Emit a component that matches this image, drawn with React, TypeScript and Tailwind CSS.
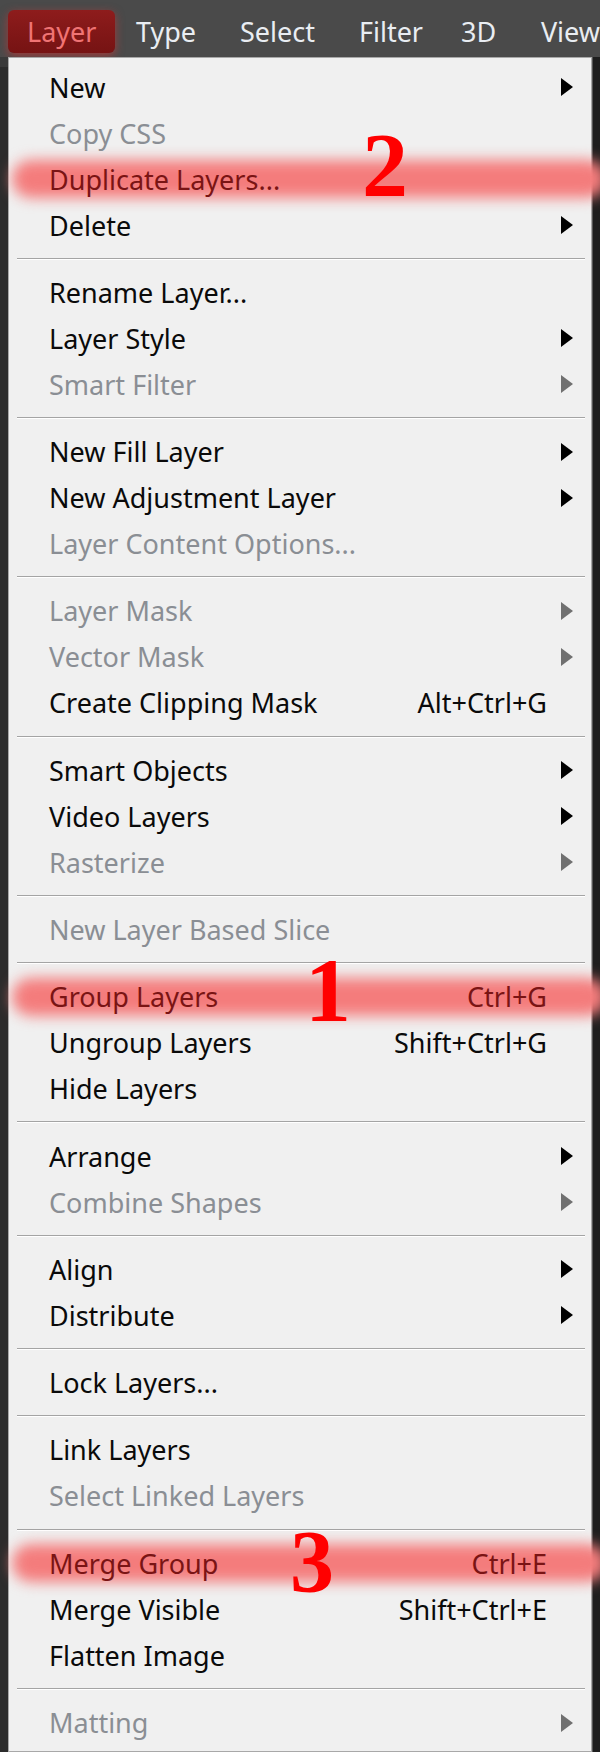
import React from 'react';

type Item = {
  label: string;
  shortcut?: string;
  arrow?: boolean;
  disabled?: boolean;
  marked?: boolean;
};

type Entry = Item | 'sep';

const entries: Entry[] = [
  { label: 'New', arrow: true },
  { label: 'Copy CSS', disabled: true },
  { label: 'Duplicate Layers...', marked: true },
  { label: 'Delete', arrow: true },
  'sep',
  { label: 'Rename Layer...' },
  { label: 'Layer Style', arrow: true },
  { label: 'Smart Filter', arrow: true, disabled: true },
  'sep',
  { label: 'New Fill Layer', arrow: true },
  { label: 'New Adjustment Layer', arrow: true },
  { label: 'Layer Content Options...', disabled: true },
  'sep',
  { label: 'Layer Mask', arrow: true, disabled: true },
  { label: 'Vector Mask', arrow: true, disabled: true },
  { label: 'Create Clipping Mask', shortcut: 'Alt+Ctrl+G' },
  'sep',
  { label: 'Smart Objects', arrow: true },
  { label: 'Video Layers', arrow: true },
  { label: 'Rasterize', arrow: true, disabled: true },
  'sep',
  { label: 'New Layer Based Slice', disabled: true },
  'sep',
  { label: 'Group Layers', shortcut: 'Ctrl+G', marked: true },
  { label: 'Ungroup Layers', shortcut: 'Shift+Ctrl+G' },
  { label: 'Hide Layers' },
  'sep',
  { label: 'Arrange', arrow: true },
  { label: 'Combine Shapes', arrow: true, disabled: true },
  'sep',
  { label: 'Align', arrow: true },
  { label: 'Distribute', arrow: true },
  'sep',
  { label: 'Lock Layers...' },
  'sep',
  { label: 'Link Layers' },
  { label: 'Select Linked Layers', disabled: true },
  'sep',
  { label: 'Merge Group', shortcut: 'Ctrl+E', marked: true },
  { label: 'Merge Visible', shortcut: 'Shift+Ctrl+E' },
  { label: 'Flatten Image' },
  'sep',
  { label: 'Matting', arrow: true, disabled: true },
];

const Arrow = ({ disabled }: { disabled?: boolean }) => (
  <svg width="12" height="18" viewBox="0 0 12 18" className="block">
    <polygon points="0,0 12,9 0,18" fill={disabled ? '#707070' : '#000000'} />
  </svg>
);

const MenuRow = ({ item }: { item: Item }) => {
  const color = item.marked
    ? 'text-[#7a1414]'
    : item.disabled
      ? 'text-[#8a8e94]'
      : 'text-[#0a0a0a]';

  return (
    <div className="relative h-[46px] flex items-center pl-[40px] pr-[18px]">
      {item.marked && (
        <div className="absolute z-[1] left-[3px] right-[-16px] top-1/2 -translate-y-1/2 h-[38px] rounded-full bg-[#f47c7c] blur-[7px]" />
      )}
      <span className={`relative z-[2] flex-1 text-[27px] leading-none whitespace-nowrap ${color}`}>
        {item.label}
      </span>
      {item.shortcut && (
        <span className={`relative z-[2] text-[27px] leading-none whitespace-nowrap ${color}`}>
          {item.shortcut}
        </span>
      )}
      <div className="relative z-[2] w-[14px]" />
      <div className="relative z-[2] w-[12px]">
        {item.arrow && <Arrow disabled={item.disabled} />}
      </div>
    </div>
  );
};

const Separator = () => (
  <div className="h-[21.3px] flex items-center pl-[8px] pr-[6px]">
    <div className="h-[2px] w-full bg-[#a4a4a4] border-b border-white" />
  </div>
);

export default function App() {
  return (
    <div className="relative w-[600px] h-[1752px] overflow-hidden bg-[#1c1c1c] font-['Noto_Sans',sans-serif]">
      {/* top menu bar */}
      <div className="h-[57px] bg-[#4a4a4a] flex items-start text-[27px] leading-none text-[#e9edf2]">
        <div className="mt-[10px] ml-[8px] h-[43px] w-[107px] pl-[19px] flex items-center rounded-[6px] bg-gradient-to-b from-[#8e1c1c] to-[#761313] shadow-[0_3px_10px_rgba(230,50,50,0.55)] text-[#f07474]">
          Layer
        </div>
        <div className="ml-[21px] mt-[10px] h-[43px] w-[104px] flex items-center">Type</div>
        <div className="mt-[10px] h-[43px] w-[119px] flex items-center">Select</div>
        <div className="mt-[10px] h-[43px] w-[102px] flex items-center">Filter</div>
        <div className="mt-[10px] h-[43px] w-[80px] flex items-center">3D</div>
        <div className="mt-[10px] h-[43px] flex items-center whitespace-nowrap">View</div>
      </div>

      <div className="flex">
        <div className="w-[8px] h-[1695px] bg-[#2c2c2c] border-t-[10px] border-[#3a3a3a]" />
        <div className="w-[584px] bg-[#f0f0f0] border border-[#a8a8a8] pt-[6px] pb-[2px]">
          {entries.map((e, i) =>
            e === 'sep' ? <Separator key={i} /> : <MenuRow key={i} item={e} />
          )}
        </div>
        <div className="w-[8px] bg-[#1e1e1e] border-l border-[#555]" />
      </div>

      {/* red annotation numbers */}
      <span className="absolute z-10 left-[362px] top-[119px] text-[92px] leading-none font-bold text-[#ff0000] font-['Liberation_Serif',serif]">2</span>
      <span className="absolute z-10 left-[305px] top-[944px] text-[92px] leading-none font-bold text-[#ff0000] font-['Liberation_Serif',serif]">1</span>
      <span className="absolute z-10 left-[290px] top-[1518px] text-[88px] leading-none font-bold text-[#ff0000] font-['Liberation_Serif',serif]">3</span>
    </div>
  );
}
